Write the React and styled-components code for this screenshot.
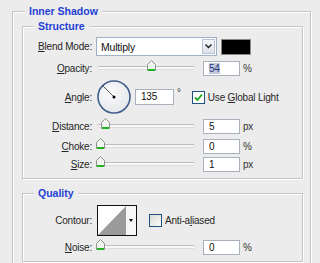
import React from "react";
import styled, { createGlobalStyle } from "styled-components";

const GlobalStyle = createGlobalStyle`
  html, body {
    margin: 0;
    background: #ececec;
    overflow: hidden;
  }
  body {
    font-family: "Liberation Sans", Arial, sans-serif;
    font-size: 10px;
    letter-spacing: -0.2px;
    color: #1e1e1e;
  }
`;

const Page = styled.div`
  padding: 11px 0 0 12px;
`;

// etched group box, like a windows fieldset
const Group = styled.div`
  position: relative;
  box-sizing: border-box;
  width: ${(p) => p.$w}px;
  margin-top: ${(p) => p.$mt || 0}px;
  padding: ${(p) => p.$pad};
  border: 1px solid #c4c4c4;
  box-shadow: 1px 1px 0 #fff, inset 1px 1px 0 #fff;
`;

const Legend = styled.span`
  position: absolute;
  top: -7px;
  left: ${(p) => p.$left}px;
  padding: 0 4px;
  background: #ececec;
  font-size: 10.5px;
  letter-spacing: 0;
  font-weight: bold;
  line-height: 13px;
  color: #1f3fd6;
`;

const Row = styled.div`
  display: flex;
  align-items: center;
  height: ${(p) => p.$h}px;
`;

const Label = styled.span`
  flex: none;
  width: 69px;
  margin-right: 4px;
  text-align: right;
  white-space: nowrap;
  color: #262626;
`;

const Select = styled.div`
  box-sizing: border-box;
  display: flex;
  align-items: center;
  justify-content: space-between;
  width: 121px;
  height: 19px;
  padding: 1px 1px 1px 4px;
  background: #fff;
  border: 1px solid #9fb0c8;
  color: #111;
  font-size: 10.5px;
`;

const SelectButton = styled.span`
  box-sizing: border-box;
  display: flex;
  align-items: center;
  justify-content: center;
  width: 13px;
  height: 15px;
  background: linear-gradient(#f4f6fa, #dde2ea);
  border: 1px solid #b7c2d4;
`;

const Swatch = styled.div`
  box-sizing: border-box;
  width: 30px;
  height: 16px;
  margin-left: 4px;
  background: #000;
  border: 1px solid #8a8a8a;
`;

const Track = styled.div`
  position: relative;
  flex: none;
  width: 98px;
  height: 4px;
  margin-left: 1px;
  box-sizing: border-box;
  background: #f8f8f6;
  border-top: 1px solid #bdbdbd;
  border-bottom: 1px solid #dcdcd8;
  border-radius: 2px;
`;

const Thumb = styled.svg`
  position: absolute;
  top: -7px;
  width: 9px;
  height: 11px;
`;

const Field = styled.div`
  box-sizing: border-box;
  flex: none;
  width: ${(p) => p.$w || 37}px;
  height: ${(p) => p.$h || 15}px;
  margin-left: ${(p) => p.$ml || 0}px;
  padding-left: 5px;
  background: #fff;
  border: 1px solid #a9b1bc;
  line-height: ${(p) => (p.$h || 15) - 2}px;
  color: #111;
`;

const Picked = styled.span`
  background: #c3c8da;
  color: #253a7a;
`;

const Unit = styled.span`
  margin-left: ${(p) => p.$ml || 4}px;
  color: #333;
  align-self: ${(p) => (p.$raised ? "flex-start" : "center")};
  margin-top: ${(p) => (p.$raised ? 7 : 0)}px;
`;

const Dial = styled.svg`
  flex: none;
  width: 34px;
  height: 34px;
  margin-left: 1px;
`;

const Check = styled.span`
  box-sizing: border-box;
  flex: none;
  display: flex;
  align-items: center;
  justify-content: center;
  width: 13px;
  height: 13px;
  margin-left: ${(p) => p.$ml}px;
  background: ${(p) => (p.$on ? "#fff" : "linear-gradient(135deg, #dcdcd6, #fafaf8)")};
  border: 1px solid #1c5180;
`;

const CheckText = styled.span`
  margin-left: 3px;
  color: #262626;
`;

const ContourBox = styled.svg`
  flex: none;
  width: 40px;
  height: 31px;
  margin-left: 1px;
`;

const Slider = ({ value, max }) => (
  <Track>
    <Thumb viewBox="0 0 9 11" style={{ left: 4 + (value / max) * 94 - 5 }}>
      <path d="M0.5 4.5 L4.5 0.5 L8.5 4.5 L8.5 10.5 L0.5 10.5 Z" fill="#f2f4f0" stroke="#8b948b" />
      <rect x="1" y="9" width="7" height="2" fill="#22b522" />
    </Thumb>
  </Track>
);

const SliderRow = ({ label, value, max, unit, h, text }) => (
  <Row $h={h}>
    <Label>{label}</Label>
    <Slider value={value} max={max} />
    <Field $ml={8}>{text || value}</Field>
    <Unit $ml={3}>{unit}</Unit>
  </Row>
);

export default function App() {
  return (
    <>
      <GlobalStyle />
      <Page>
        <Group $w={299} $pad="14px 6px 12px 9px">
          <Legend $left={12}>Inner Shadow</Legend>

          <Group $w={281} $pad="10px 0 4px 0">
            <Legend $left={11}>Structure</Legend>
            <Row $h={19}>
              <Label>
                <u>B</u>lend Mode:
              </Label>
              <Select>
                Multiply
                <SelectButton>
                  <svg width="7" height="5" viewBox="0 0 7 5">
                    <path d="M0.5 0.5 L3.5 3.5 L6.5 0.5" fill="none" stroke="#222" strokeWidth="1.4" />
                  </svg>
                </SelectButton>
              </Select>
              <Swatch />
            </Row>
            <Row $h={24}>
              <Label>
                <u>O</u>pacity:
              </Label>
              <Slider value={54} max={100} />
              <Field $ml={8}>
                <Picked>54</Picked>
              </Field>
              <Unit $ml={3}>%</Unit>
            </Row>
            <Row $h={34}>
              <Label>
                <u>A</u>ngle:
              </Label>
              <Dial viewBox="0 0 34 34">
                <defs>
                  <radialGradient id="dialFill" cx="40%" cy="35%" r="70%">
                    <stop offset="0" stopColor="#fbfbfb" />
                    <stop offset="1" stopColor="#e4e6ea" />
                  </radialGradient>
                </defs>
                <circle cx="17" cy="17" r="16" fill="url(#dialFill)" stroke="#3f5d8d" strokeWidth="1.6" />
                <line x1="17" y1="17" x2="5.5" y2="5.5" stroke="#555" strokeWidth="1" />
                <circle cx="17" cy="17" r="1.5" fill="#000" />
              </Dial>
              <Field $w={39} $h={16} $ml={4}>
                135
              </Field>
              <Unit $ml={3} $raised>
                °
              </Unit>
              <Check $ml={11} $on>
                <svg width="9" height="9" viewBox="0 0 9 9">
                  <path d="M1 4.5 L3.5 7 L8 1.5" fill="none" stroke="#1fa51f" strokeWidth="1.8" />
                </svg>
              </Check>
              <CheckText>
                Use <u>G</u>lobal Light
              </CheckText>
            </Row>
            <SliderRow
              h={24}
              label={
                <>
                  <u>D</u>istance:
                </>
              }
              value={5}
              max={100}
              unit="px"
            />
            <SliderRow
              h={16}
              label={
                <>
                  <u>C</u>hoke:
                </>
              }
              value={0}
              max={100}
              unit="%"
            />
            <SliderRow
              h={20}
              label={
                <>
                  <u>S</u>ize:
                </>
              }
              value={1}
              max={250}
              unit="px"
            />
          </Group>

          <Group $w={281} $mt={14} $pad="11px 0 3px 0">
            <Legend $left={11}>Quality</Legend>
            <Row $h={31}>
              <Label>Contour:</Label>
              <ContourBox viewBox="0 0 40 31">
                <rect x="0.5" y="0.5" width="39" height="30" fill="#fff" stroke="#111" />
                <path d="M1 30 L29 1 L29 30 Z" fill="#9a9a9a" />
                <rect x="29" y="1" width="10" height="29" fill="#f6f6f6" />
                <path d="M32 14 L36 14 L34 17 Z" fill="#111" />
              </ContourBox>
              <Check $ml={12} />
              <CheckText>
                Anti-a<u>l</u>iased
              </CheckText>
            </Row>
            <SliderRow
              h={22}
              label={
                <>
                  <u>N</u>oise:
                </>
              }
              value={0}
              max={100}
              unit="%"
            />
          </Group>
        </Group>
      </Page>
    </>
  );
}
